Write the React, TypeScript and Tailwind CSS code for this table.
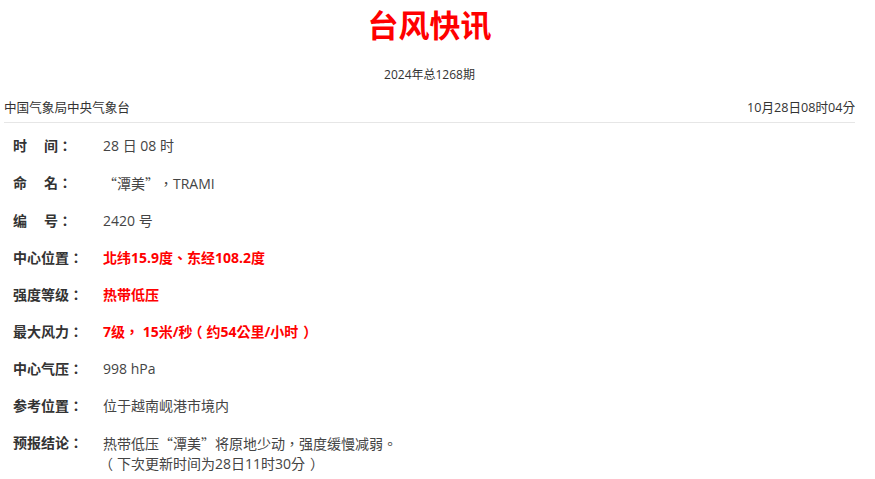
import React from "react";

const F = { fontFamily: '"Open Sans", "Noto Sans CJK TC", sans-serif' };
const SC = { fontFamily: '"Noto Sans CJK SC", sans-serif' };

function Q({ children }: { children: React.ReactNode }) {
  return (
    <>
      <span style={SC}>“</span>
      {children}
      <span style={SC}>”</span>
    </>
  );
}

function L() {
  return <span className="relative left-[-4px]">（</span>;
}
function R() {
  return <span className="relative left-[5px]">）</span>;
}

function Row({ label, children, red }: { label: React.ReactNode; children: React.ReactNode; red?: boolean }) {
  return (
    <div className="flex leading-[20px] text-[14px]">
      <div className="w-[90px] shrink-0 font-bold text-[#333]">{label}</div>
      <div className={red ? "font-bold text-[#ff0000]" : "text-[#444]"}>{children}</div>
    </div>
  );
}

export default function App() {
  return (
    <div className="w-[875px] h-[479px] bg-white overflow-hidden [text-spacing-trim:space-all]" style={F}>
      <div className="ml-[4px] w-[851px]">
        <div className="pt-[10px] text-center text-[31px] leading-[30px] font-bold text-[#ff0000]">台风快讯</div>
        <div className="mt-[25px] text-center text-[12px] leading-[20px] text-[#333]">2024年总1268期</div>
        <div className="mt-[13px] flex justify-between text-[12.6px] leading-[20px] text-[#333] pb-[4px] border-b border-[#e6e6e6]">
          <span>中国气象局中央气象台</span>
          <span>10月28日08时04分</span>
        </div>
        <div className="pl-[9px] pt-[13px] flex flex-col gap-[17px]">
          <Row label={<><span>时</span><span className="ml-[17px]">间：</span></>}>28 日 08 时</Row>
          <Row label={<><span>命</span><span className="ml-[17px]">名：</span></>}><Q>潭美</Q>，TRAMI</Row>
          <Row label={<><span>编</span><span className="ml-[17px]">号：</span></>}>2420 号</Row>
          <Row label="中心位置：" red>北纬15.9度、东经108.2度</Row>
          <Row label="强度等级：" red>热带低压</Row>
          <Row label="最大风力：" red>7级， 15米/秒<L />约54公里/小时<R /></Row>
          <Row label="中心气压：">998 hPa</Row>
          <Row label="参考位置：">位于越南岘港市境内</Row>
          <Row label="预报结论：">
            <div>热带低压<Q>潭美</Q>将原地少动，强度缓慢减弱。</div>
            <div><L />下次更新时间为28日11时30分<R /></div>
          </Row>
        </div>
      </div>
    </div>
  );
}
